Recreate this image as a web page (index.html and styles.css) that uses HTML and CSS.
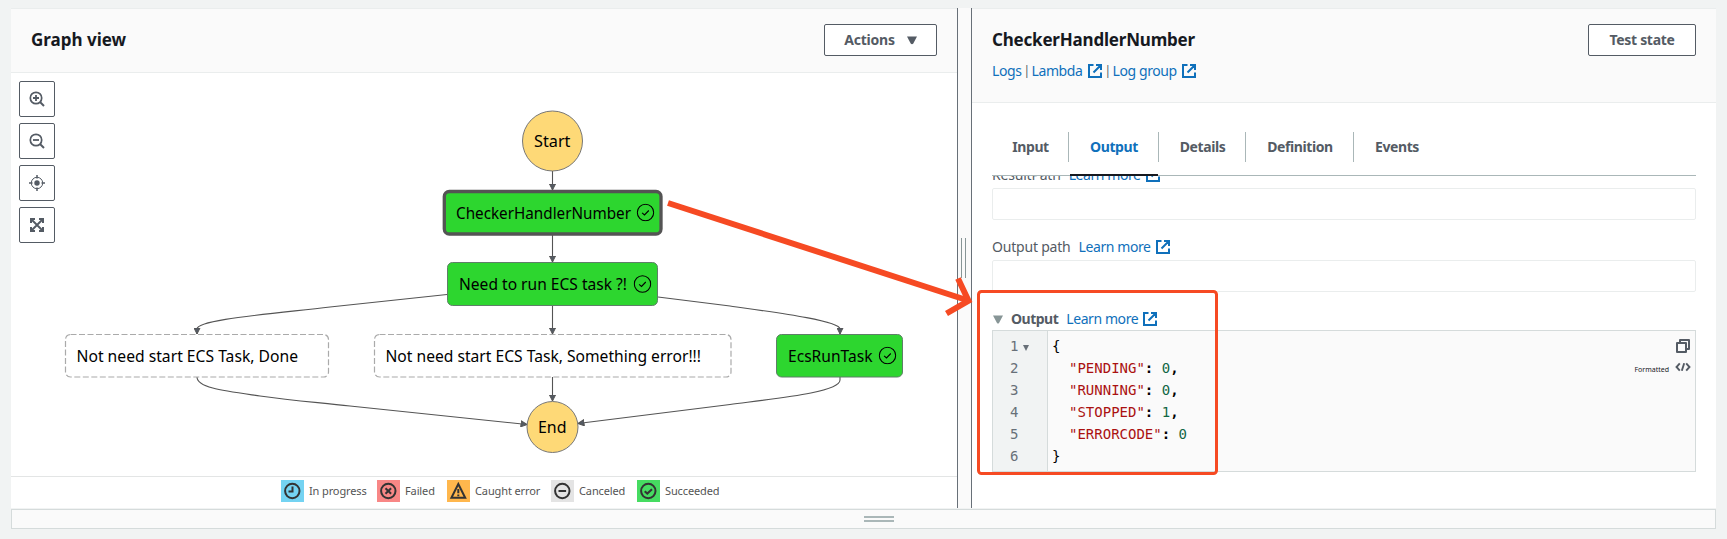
FILE: index.html
```
<!DOCTYPE html>
<html lang="en">
<head>
<meta charset="utf-8">
<title>Graph view</title>
<link rel="stylesheet" href="styles.css">
</head>
<body>
<svg class="defs" width="0" height="0" aria-hidden="true">
  <symbol id="ext" viewBox="0 0 16 16"><path d="M6.5 2H2v12h12V9.500M9 2h5v5M14 2L6.500 9.500" fill="none" stroke="currentColor" stroke-width="2"/></symbol>
  <symbol id="check" viewBox="-9 -9 18 18"><circle r="8.200" fill="none" stroke="#000" stroke-width="1.100"/><path d="M-3.400 .3L-1 2.500L3.300-2" fill="none" stroke="#000" stroke-width="1.100"/></symbol>
</svg>
<main class="page">
  <div class="split">
    <section class="graph-panel">
      <header class="panel-head">
        <h2 class="title">Graph view</h2>
        <button class="btn actions">Actions<svg width="10" height="9" viewBox="0 0 10 9"><path d="M0 .5h10L6.300 7.500Q5 9 3.700 7.500z" fill="currentColor"/></svg></button>
      </header>
      <div class="canvas">
        <div class="tools">
          <button class="tool"><svg width="16" height="16" viewBox="0 0 16 16" fill="none" stroke="currentColor"><circle cx="7" cy="7" r="5.700" stroke-width="1.700"/><path d="M11 11l4 4" stroke-width="2"/><path d="M4 7h6M7 4v6" stroke-width="1.800"/></svg></button>
          <button class="tool"><svg width="16" height="16" viewBox="0 0 16 16" fill="none" stroke="currentColor"><circle cx="7" cy="7" r="5.700" stroke-width="1.700"/><path d="M11 11l4 4" stroke-width="2"/><path d="M4 7h6" stroke-width="1.800"/></svg></button>
          <button class="tool"><svg width="16" height="16" viewBox="0 0 16 16" fill="none" stroke="currentColor"><circle cx="8" cy="8" r="5.700" stroke-width="1"/><circle cx="8" cy="8" r="2.700" fill="currentColor" stroke="none"/><path d="M8 0v3.500M8 12.500V16M0 8h3.500M12.500 8H16" stroke-width="1.500"/></svg></button>
          <button class="tool"><svg width="16" height="16" viewBox="0 0 16 16" fill="none" stroke="currentColor" stroke-width="2"><path d="M6 2H2v4M10 2h4v4M14 10v4h-4M6 14H2v-4"/><path d="M2.500 2.500l11 11M13.500 2.500l-11 11" stroke-width="1.900"/></svg></button>
        </div>
        <svg class="graph" width="946" height="403" viewBox="11 73 946 403">
          <defs><marker id="arrow" viewBox="0 0 7 7" refX="6.500" refY="3.500" markerWidth="7" markerHeight="7" markerUnits="userSpaceOnUse" orient="auto"><path d="M.5 .5L6.500 3.500L.5 6.500z" fill="#545b64" stroke="#545454"/></marker></defs>
          <g class="edges">
            <path d="M552.500 171V190"/>
            <path d="M552.500 235V262"/>
            <path d="M552.500 305V334"/>
            <path d="M552.500 377V401"/>
            <path d="M447 294.500L330 307C260 315 197 320 197 329V334"/>
            <path d="M658 297L730 306C780 313 840 321 840 329V334"/>
            <path d="M197 377C197 388 225 391 260 396S320 402.500 350 406L527 424.500"/>
            <path d="M840 377V380C840 392 780 398 730 404.500L578 423.500"/>
          </g>
          <circle class="terminal" cx="552.500" cy="141" r="30"/>
          <circle class="terminal" cx="552.500" cy="427" r="25.500"/>
          <rect class="ok selected" x="444.300" y="191.500" width="216.700" height="42.500" rx="5"/>
          <rect class="ok" x="447.500" y="262.500" width="210" height="43" rx="5"/>
          <rect class="ok" x="776.500" y="334.500" width="126" height="42.500" rx="5"/>
          <rect class="idle" x="65.500" y="334.500" width="263" height="42.500" rx="5"/>
          <rect class="idle" x="374.500" y="334.500" width="356.500" height="42.500" rx="5"/>
          <g class="labels">
            <text x="534" y="146.500" textLength="36.500" lengthAdjust="spacingAndGlyphs">Start</text>
            <text x="456" y="218.500" textLength="175" lengthAdjust="spacingAndGlyphs">CheckerHandlerNumber</text>
            <text x="459" y="289.500" textLength="168" lengthAdjust="spacingAndGlyphs">Need to run ECS task ?!</text>
            <text x="788" y="361.500" textLength="84.500" lengthAdjust="spacingAndGlyphs">EcsRunTask</text>
            <text x="76.500" y="361.500" textLength="221.500" lengthAdjust="spacingAndGlyphs">Not need start ECS Task, Done</text>
            <text x="385.500" y="361.500" textLength="315.500" lengthAdjust="spacingAndGlyphs">Not need start ECS Task, Something error!!!</text>
            <text x="538" y="432.700" textLength="28.500" lengthAdjust="spacingAndGlyphs">End</text>
          </g>
          <use href="#check" x="636.500" y="203.500" width="18" height="18"/>
          <use href="#check" x="633.500" y="275" width="18" height="18"/>
          <use href="#check" x="878.500" y="346.500" width="18" height="18"/>
        </svg>
      </div>
      <footer class="legend">
        <span class="item w1"><svg class="chip blue" viewBox="0 0 23 22"><circle cx="11.300" cy="11" r="7.200"/><path d="M11.500 6.500V11.500H7.500"/></svg><span>In progress</span></span>
        <span class="item w2"><svg class="chip red" viewBox="0 0 23 22"><circle cx="11.300" cy="11" r="7.200"/><path d="M8.500 8.200l5.600 5.600M14.100 8.200l-5.600 5.600"/></svg><span>Failed</span></span>
        <span class="item w3"><svg class="chip orange" viewBox="0 0 23 22"><path d="M11.300 4L18.200 17.800H4.400z"/><path d="M11.300 9v4.200M11.300 14.500v1.700"/></svg><span>Caught error</span></span>
        <span class="item w4"><svg class="chip gray" viewBox="0 0 23 22"><circle cx="11.300" cy="11" r="7.200"/><path d="M7.500 11h7.600"/></svg><span>Canceled</span></span>
        <span class="item w5"><svg class="chip green" viewBox="0 0 23 22"><circle cx="11.300" cy="11" r="7.200"/><path d="M7.700 11.200l2.600 2.400 4.700-4.400"/></svg><span>Succeeded</span></span>
      </footer>
    </section>
    <div class="divider"><i class="grip"></i></div>
    <section class="detail-panel">
      <header class="detail-head">
        <div>
          <h2 class="title name">CheckerHandlerNumber</h2>
          <p class="links"><a>Logs</a><b>|</b><a>Lambda</a><svg class="ext"><use href="#ext"/></svg><b>|</b><a>Log group</a><svg class="ext"><use href="#ext"/></svg></p>
        </div>
        <button class="btn test">Test state</button>
      </header>
      <div class="detail-body">
        <nav class="tabs">
          <a class="tab t1">Input</a><a class="tab t2 active">Output</a><a class="tab t3">Details</a><a class="tab t4">Definition</a><a class="tab t5">Events</a>
        </nav>
        <div class="scroll">
          <div class="label cut"><span>ResultPath</span><a>Learn more</a><svg class="ext"><use href="#ext"/></svg></div>
          <div class="input"></div>
          <div class="label"><span>Output path</span><a>Learn more</a><svg class="ext"><use href="#ext"/></svg></div>
          <div class="input"></div>
          <div class="label"><svg class="caret" viewBox="0 0 10 9"><path d="M0 .5h10L6 8Q5 9 4 8z" fill="#879596"/></svg><strong>Output</strong><a>Learn more</a><svg class="ext"><use href="#ext"/></svg></div>
          <div class="editor">
            <ol class="gutter"><li>1<svg width="6" height="6" viewBox="0 0 6 6"><path d="M0 0h6L3 6z" fill="#687078"/></svg></li><li>2</li><li>3</li><li>4</li><li>5</li><li>6</li></ol>
            <div class="code">
              <div>{</div>
              <div class="in"><span class="key">"PENDING"</span><b>: </b><span class="num">0</span><b>,</b></div>
              <div class="in"><span class="key">"RUNNING"</span><b>: </b><span class="num">0</span><b>,</b></div>
              <div class="in"><span class="key">"STOPPED"</span><b>: </b><span class="num">1</span><b>,</b></div>
              <div class="in"><span class="key">"ERRORCODE"</span><b>: </b><span class="num">0</span></div>
              <div>}</div>
            </div>
            <div class="editor-tools">
              <svg width="16" height="16" viewBox="0 0 16 16" fill="none" stroke="currentColor" stroke-width="2" stroke-linejoin="round"><path d="M2 5h9v9H2zM5 5V2h9v9h-3"/></svg>
              <div class="fmt"><span>Formatted</span><svg width="16" height="10" viewBox="0 0 16 10" fill="none" stroke="currentColor" stroke-width="1.900"><path d="M4.800 1.300L1.500 5l3.300 3.700M11.200 1.300L14.500 5l-3.300 3.700M9.200 1.300L6.800 8.700"/></svg></div>
            </div>
          </div>
        </div>
      </div>
    </section>
  </div>
  <div class="bottom-bar"><i></i></div>
</main>
<svg class="callout" width="1727" height="539" viewBox="0 0 1727 539" fill="none" stroke="#f64a23">
  <path d="M668 203L968 300.500" stroke-width="6"/>
  <path d="M958 278.500L968.500 300.800L946.500 313.500" stroke-width="6"/>
  <rect x="978.500" y="291.500" width="238" height="182" rx="3" stroke-width="3"/>
</svg>
</body>
</html>
```
FILE: styles.css
```
* { box-sizing: border-box; }
body { margin: 0; background: #f1f3f3; color: #545b64; font: 14px/22px "Noto Sans", "Open Sans", sans-serif; overflow: hidden; }
.defs { position: absolute; }
h2, p, ol { margin: 0; padding: 0; }
a { color: #0f70bb; }
svg { flex: none; }
.page { width: 1727px; height: 539px; padding: 8px 11px; }
.split { display: flex; height: 500px; }
.graph-panel { width: 946px; display: flex; flex-direction: column; background: #fff; }
.panel-head { height: 65px; display: flex; justify-content: space-between; align-items: flex-start; padding: 15px 20px 0; background: #fafafa; border-top: 1px solid #eaeded; border-bottom: 1px solid #eaeded; }
.title { font-size: 17px; line-height: 28px; padding-top: 2px; font-weight: 700; color: #16191f; }
.name { letter-spacing: -.2px; }
.btn { height: 32px; display: flex; align-items: center; justify-content: center; border: 1px solid #545b64; border-radius: 2px; background: #fff; color: #545b64; font: 700 14px/22px "Noto Sans", sans-serif; padding: 0; }
.actions { width: 113px; gap: 12px; letter-spacing: -.2px; }
.test { width: 108px; letter-spacing: -.3px; }
.canvas { height: 403px; display: grid; }
.tools { grid-area: 1/1; padding: 8px; display: flex; flex-direction: column; gap: 6px; z-index: 1; width: 52px; }
.tool { width: 36px; height: 36px; padding: 0; display: grid; place-items: center; background: #fff; border: 1px solid #545b64; border-radius: 2px; color: #545b64; }
.graph { grid-area: 1/1; display: block; }
.edges path { fill: none; stroke: #545454; stroke-width: 1.100; marker-end: url(#arrow); }
.terminal { fill: #fed977; stroke: #777; }
.ok { fill: #2dd62f; stroke: #5f7f68; }
.selected { stroke: #545454; stroke-width: 3.300; }
.idle { fill: #fff; stroke: #aaa; stroke-dasharray: 6 2.500; stroke-width: 1.200; }
.labels text { font: 15.500px "Noto Sans", sans-serif; fill: #000; }
.legend { height: 32px; border-top: 1px solid #e3e5e5; display: flex; align-items: flex-start; padding: 3px 0 0 270px; font-size: 11px; letter-spacing: -.12px; color: #545454; }
.item { display: flex; gap: 5px; white-space: nowrap; }
.w1 { width: 96px; }
.w2 { width: 70px; }
.w3 { width: 104px; }
.w4 { width: 86px; }
.w5 { width: 82px; }
.chip { width: 23px; height: 22px; fill: none; stroke: #333; stroke-width: 2; }
.blue { background: #74d3f2; }
.red { background: #f88786; }
.orange { background: #ffb74d; }
.gray { background: #e4e4e4; }
.green { background: #46dc61; }
.divider { width: 15px; background: #fafafa; border-left: 1px solid #687078; border-right: 1px solid #687078; padding: 230px 0 0 3px; }
.grip { display: block; width: 5px; height: 40px; border-left: 1px solid #879596; border-right: 1px solid #879596; }
.detail-panel { width: 744px; background: #fff; }
.detail-head { height: 95px; display: flex; justify-content: space-between; background: #fafafa; border-top: 1px solid #eaeded; border-bottom: 1px solid #eaeded; padding: 15px 20px 0; }
.links { display: flex; align-items: center; padding-top: 6px; letter-spacing: -.4px; }
.links b { font-weight: 400; font-size: 12px; width: 10px; text-align: center; }
.ext { width: 16px; height: 16px; color: #0f70bb; margin-left: 4px; }
.detail-body { padding: 21px 20px 0; }
.tabs { height: 52px; display: flex; border-bottom: 1px solid #aab7b8; font-weight: 700; letter-spacing: -.4px; }
.tab { height: 52px; padding-top: 12px; text-align: center; color: #545b64; background: linear-gradient(#aab7b8, #aab7b8) right 8px/1px 30px no-repeat; }
.t1 { width: 77px; }
.t2 { width: 90px; }
.t3 { width: 87px; }
.t4 { width: 108px; }
.t5 { width: 86px; background: none; }
.active { color: #0f70bb; background: linear-gradient(#aab7b8, #aab7b8) right 8px/1px 30px no-repeat, linear-gradient(#16191f, #16191f) 1px 100%/88px 2px no-repeat; }
.scroll { overflow: hidden; }
.label { height: 40px; padding-top: 14px; display: flex; align-items: center; line-height: 22px; letter-spacing: -.2px; }
.label.cut { margin-top: -28px; }
.label a { margin-left: 8px; letter-spacing: -.42px; }
.label strong { letter-spacing: -.5px; }
.input { height: 32px; border: 1px solid #eaeded; border-radius: 2px; }
.caret { width: 10px; height: 9px; margin: 0 8px 0 1px; }
.editor { height: 142px; margin-top: -2px; display: flex; border: 1px solid #d5dbdb; background: #fafafa; font: 14px/22px "DejaVu Sans Mono", monospace; }
.gutter { list-style: none; width: 55px; padding: 4px 0 0 17px; background: #f1f3f3; border-right: 1px solid #d5dbdb; color: #687078; }
.gutter svg { margin-left: 5px; }
.code { color: #000; padding: 4px 0 0 4px; flex: 1; white-space: nowrap; }
.code .in { padding-left: 17px; }
.code b { white-space: pre; }
.key { color: #a11; }
.num { color: #164; }
.editor-tools { width: 70px; color: #545b64; display: flex; flex-direction: column; align-items: flex-end; padding: 7px 4px 0 0; gap: 8px; }
.fmt { display: flex; gap: 6px; }
.fmt span { font: 7px/16px "Noto Sans", sans-serif; color: #16191f; }
.bottom-bar { height: 20px; margin-top: 1px; border: 1px solid #d5dbdb; background: #fafafa; padding: 6px 0 0 852px; }
.bottom-bar i { display: block; width: 30px; height: 6px; border-top: 2px solid #aab7b8; border-bottom: 2px solid #aab7b8; }
.callout { position: absolute; left: 0; top: 0; pointer-events: none; }
```
